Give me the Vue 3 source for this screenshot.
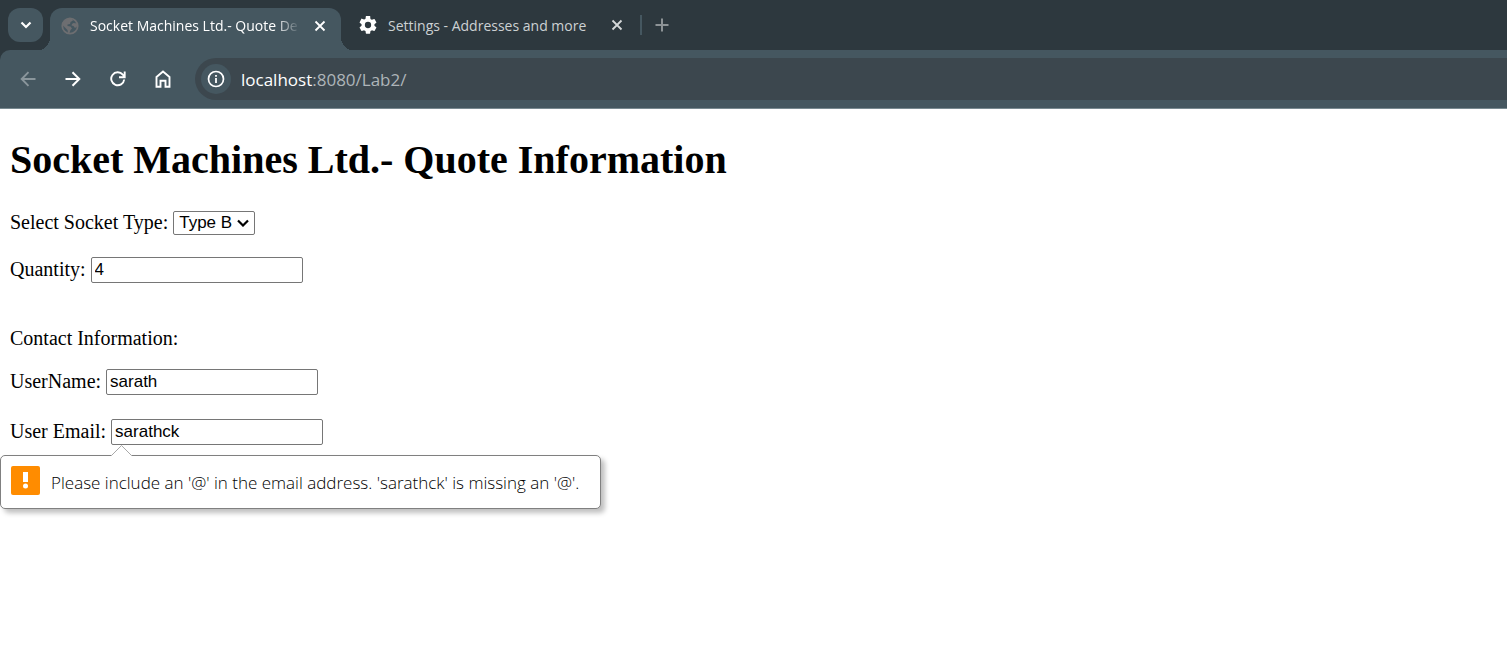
<script setup>
import { ref } from 'vue'

const socketType = ref('Type B')
const quantity = ref('4')
const userName = ref('sarath')
const email = ref('sarathck')
</script>

<template>
  <div class="window">
    <header class="chrome">
      <div class="tabstrip">
        <button class="search-tabs" aria-label="Search tabs">
          <svg width="12" height="8" viewBox="0 0 12 8"><path d="M1.5 1.5 6 6l4.5-4.5" fill="none" stroke="#fff" stroke-width="2.2" /></svg>
        </button>
        <div class="tab active">
          <svg class="favicon" width="18" height="18" viewBox="0 0 18 18">
            <circle cx="9" cy="9" r="7.7" fill="none" stroke="#6d6e71" stroke-width="1.8" />
            <path d="M1.500 8 3 4l4-2.500 4 .5 1 1.500-2.500 1.500-.5 2-2.500.5v1.500l3 .5 1.500 2-1.500 1.500-1 3H7l-.5-3-2.500-2.500zM12.500 6l3.500.5v3l-2 1.500-1.500-2-2-.5.5-1.500z" fill="#6d6e71" />
          </svg>
          <span class="title faded">Socket Machines Ltd.- Quote De</span>
          <button class="close" aria-label="Close tab">
            <svg width="12" height="12" viewBox="0 0 12 12"><path d="m1.500 1.500 9 9m0-9-9 9" stroke="#fff" stroke-width="1.800" /></svg>
          </button>
        </div>
        <div class="tab">
          <svg class="favicon" width="18" height="18" viewBox="2 2 20 20">
            <path fill="#fff" d="M19.140 12.940c.04-.3.06-.61.06-.94s-.02-.64-.07-.94l2.030-1.580a.49.490 0 0 0 .12-.61l-1.920-3.320a.488.488 0 0 0-.59-.22l-2.390.96c-.5-.38-1.030-.7-1.620-.94l-.36-2.540A.484.484 0 0 0 13.920 2h-3.840c-.24 0-.43.17-.47.410l-.36 2.540c-.59.24-1.130.57-1.620.94l-2.390-.96a.488.488 0 0 0-.59.22L2.740 8.870a.47.470 0 0 0 .12.610l2.030 1.580c-.05.3-.09.63-.09.94s.02.640.07.940l-2.030 1.580a.49.490 0 0 0-.12.610l1.920 3.320c.12.220.37.290.59.220l2.390-.96c.5.380 1.030.7 1.620.94l.36 2.540c.05.240.24.410.48.410h3.840c.24 0 .44-.17.470-.41l.36-2.540c.59-.24 1.130-.56 1.620-.94l2.390.96c.22.080.470 0 .59-.22l1.920-3.320a.47.470 0 0 0-.12-.61zM12 15.500a3.500 3.500 0 1 1 0-7 3.500 3.500 0 0 1 0 7z" />
          </svg>
          <span class="title">Settings - Addresses and more</span>
          <button class="close" aria-label="Close tab">
            <svg width="12" height="12" viewBox="0 0 12 12"><path d="m1.500 1.500 9 9m0-9-9 9" stroke="#d5d8d9" stroke-width="1.800" /></svg>
          </button>
        </div>
        <span class="divider"></span>
        <button class="new-tab" aria-label="New tab">
          <svg width="14" height="14" viewBox="0 0 14 14"><path d="M7 .5v13M.5 7h13" stroke="#8d9396" stroke-width="2" /></svg>
        </button>
      </div>
      <nav class="toolbar">
        <button class="tool" aria-label="Back">
          <svg width="16" height="16" viewBox="0 0 16 16"><path d="M15.500 8H2M8.500 1.200 1.700 8l6.800 6.800" fill="none" stroke="#8a969c" stroke-width="1.900" /></svg>
        </button>
        <button class="tool" aria-label="Forward">
          <svg width="16" height="16" viewBox="0 0 16 16"><path d="M.5 8H14M7.500 1.200 14.300 8l-6.800 6.800" fill="none" stroke="#fff" stroke-width="2" /></svg>
        </button>
        <button class="tool" aria-label="Reload">
          <svg width="16" height="16" viewBox="0 0 16 16"><path d="M14.200 8.500A6.500 6.500 0 1 1 12.800 3.700L14.500 5.500M14.700.5v5.700H9" fill="none" stroke="#fff" stroke-width="1.900" /></svg>
        </button>
        <button class="tool" aria-label="Home">
          <svg width="16" height="18" viewBox="0 0 16 18"><path d="M1.500 7 8 1.500 14.500 7v9.700h-4v-6h-5v6h-4z" fill="none" stroke="#fff" stroke-width="1.900" /></svg>
        </button>
        <div class="address">
          <button class="site-info" aria-label="View site information">
            <svg width="18" height="18" viewBox="0 0 18 18"><circle cx="9" cy="9" r="7.500" fill="none" stroke="#fff" stroke-width="1.700" /><path d="M9 8v5M9 5v1.800" stroke="#fff" stroke-width="1.800" /></svg>
          </button>
          <span class="url"><span class="host">localhost</span>:8080/Lab2/</span>
        </div>
      </nav>
    </header>

    <main>
      <h1>Socket Machines Ltd.- Quote Information</h1>
      <form novalidate @submit.prevent>
        <div class="row">
          <label for="socket">Select Socket Type:</label>
          <span class="select-wrap">
            <select id="socket" v-model="socketType">
              <option>Type A</option>
              <option>Type B</option>
              <option>Type C</option>
            </select>
            <svg class="caret" width="12" height="8" viewBox="0 0 12 8"><path d="m1 1.500 5 5 5-5" fill="none" stroke="#000" stroke-width="2.200" /></svg>
          </span>
        </div>
        <div class="row quantity">
          <label for="quantity">Quantity:</label>
          <input id="quantity" v-model="quantity" type="text">
        </div>
        <p>Contact Information:</p>
        <div class="row user">
          <label for="username">UserName:</label>
          <input id="username" v-model="userName" type="text">
        </div>
        <div class="row email">
          <label for="email">User Email:</label>
          <div class="field">
            <input id="email" v-model="email" type="text" aria-describedby="email-error">
            <svg class="pointer" width="22" height="12" viewBox="0 0 22 12"><path d="M0 12 .5 10.500 10.500.5l10 10 .5 1.500z" fill="#fff" /><path d="M.5 10.500 10.500.5l10 10" fill="none" stroke="#a9a9a9" /></svg>
          </div>
          <div id="email-error" class="bubble" role="alert">
            <svg width="29" height="29" viewBox="0 0 29 29"><rect width="29" height="29" rx="2" fill="#ff8c00" /><path d="M12 6h5v10h-5z" fill="#fff" /><circle cx="14.500" cy="20" r="2.500" fill="#fff" /></svg>
            <span>Please include an '@' in the email address. 'sarathck' is missing an '@'.</span>
          </div>
        </div>
      </form>
    </main>
  </div>
</template>

<style>
body {
  margin: 0;
  background: #fff;
}
</style>

<style scoped>
* {
  box-sizing: border-box;
}
svg {
  display: block;
  flex: none;
}
button {
  display: flex;
  align-items: center;
  justify-content: center;
  flex: none;
  padding: 0;
  border: 0;
  background: none;
}
.window {
  min-height: 100vh;
}
.chrome {
  background: #2d383e;
  font-family: "Segoe UI", "Open Sans", sans-serif;
}
.tabstrip {
  display: flex;
  align-items: flex-start;
  height: 50px;
  padding: 8px 8px 0;
}
.search-tabs {
  width: 35px;
  height: 34px;
  border-radius: 12px;
  background: #455760;
}
.tab {
  display: flex;
  align-items: center;
  width: 299px;
  height: 34px;
  padding: 0 13px 0 18px;
  color: #ccd1d3;
  font-size: 14px;
}
.tab.active {
  position: relative;
  width: 291px;
  height: 43px;
  margin-left: 7px;
  padding: 0 11px 8px;
  border-radius: 12px 12px 0 0;
  background: #455760;
  color: #fff;
}
.tab.active::before,
.tab.active::after {
  content: "";
  position: absolute;
  bottom: 0;
  width: 14px;
  height: 14px;
}
.tab.active::before {
  right: 100%;
  background: radial-gradient(circle at 0 0, transparent 14px, #455760 14px);
}
.tab.active::after {
  left: 100%;
  background: radial-gradient(circle at 100% 0, transparent 14px, #455760 14px);
}
.favicon {
  margin-right: 11px;
}
.title {
  flex: 1;
  min-width: 0;
  white-space: nowrap;
}
.faded {
  mask-image: linear-gradient(to right, #000 88%, transparent);
}
.close {
  width: 20px;
  height: 20px;
  margin-left: 10px;
}
.divider {
  width: 2px;
  height: 20px;
  margin-top: 7px;
  background: #455760;
}
.new-tab {
  width: 34px;
  height: 34px;
  margin-left: 3px;
}
.toolbar {
  display: flex;
  align-items: center;
  height: 59px;
  padding-left: 5px;
  border-bottom: 1px solid #788990;
  border-top-left-radius: 10px;
  background: #455760;
}
.tool {
  width: 45px;
  height: 40px;
}
.address {
  display: flex;
  flex: 1;
  align-items: center;
  gap: 10px;
  height: 42px;
  margin-left: 10px;
  padding-left: 6px;
  border-radius: 21px 0 0 21px;
  background: #3c474e;
}
.site-info {
  width: 30px;
  height: 30px;
  border-radius: 50%;
  background: #455760;
}
.url {
  color: #aeb5b9;
  font-size: 17px;
}
.host {
  color: #fff;
}
main {
  color: #000;
  font-family: "Times New Roman", "Liberation Serif", serif;
  font-size: 20px;
  line-height: 23px;
}
h1 {
  margin: 28px 10px 27px;
  font-size: 40px;
  line-height: 46px;
}
.row {
  display: flex;
  align-items: center;
  gap: 5px;
  height: 26px;
  padding-left: 10px;
}
.quantity {
  margin-top: 21px;
}
p {
  margin: 44px 10px 19px;
}
.email {
  position: relative;
  margin-top: 24px;
}
label {
  padding-bottom: 1px;
}
input,
select {
  border: 1px solid #767676;
  border-radius: 2px;
  background: #fff;
  color: #000;
  font-family: Arial, "Liberation Sans", sans-serif;
  font-size: 17px;
}
input {
  display: block;
  width: 212px;
  height: 26px;
  padding: 0 3px 1px;
  outline: none;
}
.select-wrap {
  position: relative;
}
select {
  display: block;
  height: 24px;
  padding: 0 21px 1px 5px;
  appearance: none;
}
.caret {
  position: absolute;
  top: 8px;
  right: 6px;
  pointer-events: none;
}
.field {
  position: relative;
}
.pointer {
  position: absolute;
  z-index: 2;
  top: 100%;
  left: 0;
}
.bubble {
  position: absolute;
  z-index: 1;
  top: calc(100% + 10px);
  left: 0;
  display: flex;
  align-items: center;
  gap: 11px;
  height: 54px;
  min-width: 601px;
  padding: 0 10px 3px;
  border: 1px solid #808080;
  border-radius: 5px;
  background: #fff;
  box-shadow: 4px 4px 5px rgba(0, 0, 0, 0.25);
  font-family: "Segoe UI", "Open Sans", sans-serif;
  font-size: 17px;
  font-weight: 300;
  white-space: nowrap;
}
.bubble span {
  padding-top: 3px;
}
</style>
